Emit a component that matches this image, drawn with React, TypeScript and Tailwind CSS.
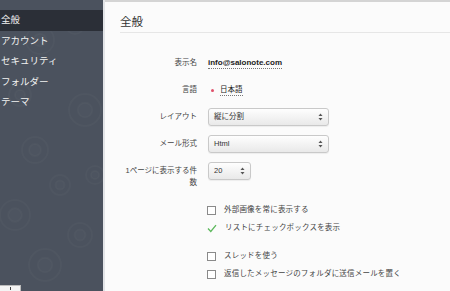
import React from "react";

const NAV = ["全般", "アカウント", "セキュリティ", "フォルダー", "テーマ"];

const FONT = { fontFamily: '"Liberation Sans", "Noto Sans CJK JP", sans-serif' };

function SelectArrows() {
  return (
    <svg width="5" height="8" viewBox="0 0 5 8" className="shrink-0">
      <path d="M2.5 0.5 L4.5 3 L0.5 3 Z" fill="#555" />
      <path d="M2.5 7.5 L4.5 5 L0.5 5 Z" fill="#555" />
    </svg>
  );
}

function FakeSelect({ value, width }: { value: string; width: string }) {
  return (
    <div
      className={`${width} h-[18px] flex items-center justify-between pl-[5px] pr-[5px] rounded-[3px] border border-[#c9c9c9] bg-gradient-to-b from-[#fefefe] to-[#e9e9e9] shadow-[0_1px_1px_rgba(0,0,0,0.06)] text-[7.5px] text-[#333]`}
    >
      <span>{value}</span>
      <SelectArrows />
    </div>
  );
}

function Checkbox({ checked, label }: { checked?: boolean; label: string }) {
  return (
    <div className="flex items-center h-[14px] ml-[-1px]">
      {checked ? (
        <svg width="10" height="9" viewBox="0 0 10 9" className="shrink-0">
          <polyline points="1,4.5 3.8,7.5 9,1.2" fill="none" stroke="#5cb85c" strokeWidth="1.3" />
        </svg>
      ) : (
        <div className="w-[9px] h-[9px] border border-[#8a8a8a] bg-white shrink-0" />
      )}
      <span className="ml-[8px] text-[7.5px] text-[#444] tracking-[0.2px]">{label}</span>
    </div>
  );
}

function SidebarPattern() {
  const rings = [
    [40, 40, 14], [75, 25, 9], [20, 95, 11], [85, 110, 16], [35, 150, 13],
    [60, 185, 10], [15, 215, 15], [80, 235, 12], [45, 265, 16], [95, 175, 9],
  ];
  return (
    <svg className="absolute inset-0" width="103" height="291">
      {rings.map(([cx, cy, r], i) => (
        <g key={i} fill="none" stroke="#ffffff" strokeOpacity="0.025" strokeWidth="2">
          <circle cx={cx} cy={cy} r={r} />
          <circle cx={cx} cy={cy} r={r / 2.2} fill="#ffffff" fillOpacity="0.015" />
        </g>
      ))}
    </svg>
  );
}

export default function App() {
  return (
    <div className="w-[450px] h-[291px] flex overflow-hidden bg-[#fbfbfb]" style={FONT}>
      <aside className="relative w-[103px] shrink-0 bg-[#4b525e] pt-[10px]">
        <SidebarPattern />
        <nav className="relative flex flex-col">
          {NAV.map((item, i) => (
            <div
              key={item}
              className={`h-[20.5px] flex items-center pl-[1px] text-[9.5px] text-[#f2f2f2] ${i === 0 ? "bg-[#2b2f37]" : ""}`}
            >
              {item}
            </div>
          ))}
        </nav>
        <div className="absolute left-0 bottom-0 w-[21px] h-[6px] bg-[#f4f4f4] border-t border-r border-[#bbb] flex justify-center">
          <div className="w-[1px] h-[3px] bg-[#444] mt-[1px]" />
        </div>
      </aside>

      <div className="w-[2px] shrink-0 bg-[#e2e4e7]" />

      <main className="flex-1 border-t-[2px] border-[#d4d4d4] pl-[15px]">
        <h1 className="h-[31px] pt-[12px] text-[11.5px] text-[#333] border-b border-[#e6e6e6]">全般</h1>

        <div className="mt-[21px] ml-[2px] grid grid-cols-[75px_1fr] gap-x-[11px] gap-y-[9px] text-[7.5px] text-[#444]">
          <div className="h-[18px] flex items-center justify-end">表示名</div>
          <div className="h-[18px] flex items-center">
            <span className="font-bold text-[#222] text-[8px] border-b border-dotted border-[#777] leading-[10px]">
              info@salonote.com
            </span>
          </div>

          <div className="h-[18px] flex items-center justify-end">言語</div>
          <div className="h-[18px] flex items-center">
            <span className="w-[3px] h-[3px] rounded-full bg-[#e0506a] ml-[3px]" />
            <span className="ml-[6px] text-[#222] border-b border-dotted border-[#777] leading-[10px]">日本語</span>
          </div>

          <div className="h-[18px] flex items-center justify-end">レイアウト</div>
          <FakeSelect value="縦に分割" width="w-[121px]" />

          <div className="h-[18px] flex items-center justify-end">メール形式</div>
          <FakeSelect value="Html" width="w-[121px]" />

          <div className="pt-[3px] leading-[12px] text-right">1ページに表示する件数</div>
          <FakeSelect value="20" width="w-[43px]" />
        </div>

        <div className="ml-[88px] mt-[14px] flex flex-col">
          <Checkbox label="外部画像を常に表示する" />
          <div className="mt-[4px]">
            <Checkbox checked label="リストにチェックボックスを表示" />
          </div>
          <div className="mt-[14px]">
            <Checkbox label="スレッドを使う" />
          </div>
          <div className="mt-[4px]">
            <Checkbox label="返信したメッセージのフォルダに送信メールを置く" />
          </div>
        </div>
      </main>
    </div>
  );
}
